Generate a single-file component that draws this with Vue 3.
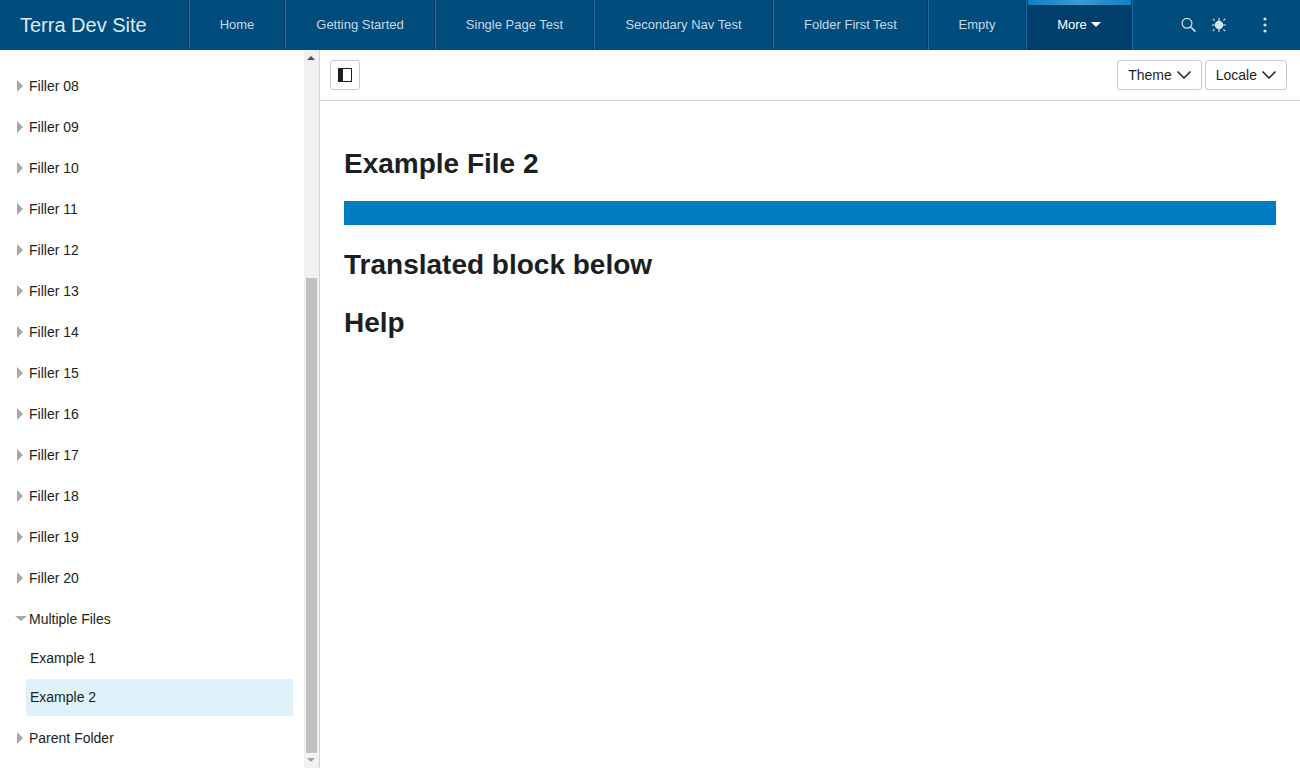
<template>
  <div class="app">
    <header class="header">
      <div class="brand">Terra Dev Site</div>
      <nav class="tabs">
        <a v-for="tab in tabs" :key="tab.label" class="tab" :style="{ width: tab.width + 'px' }">{{ tab.label }}</a>
        <a class="tab tab-more">
          More
          <span class="more-caret"></span>
        </a>
      </nav>
      <div class="utils">
        <svg class="util-search" width="16" height="16" viewBox="0 0 16 16">
          <circle cx="6" cy="6.3" r="4.9" fill="none" stroke="#d3e3ee" stroke-width="1.2" />
          <path d="M9.8 10 L14.4 14.6" stroke="#d3e3ee" stroke-width="1.6" />
        </svg>
        <svg class="util-bug" width="16" height="16" viewBox="0 0 16 16">
          <circle cx="8" cy="8" r="4.2" fill="#d3e3ee" />
          <path d="M8 1v14M1 8h14M1.8 1.8l1.8 1.8M14.2 1.8l-1.8 1.8M1.8 14.2l1.8-1.8M14.2 14.2l-1.8-1.8" stroke="#d3e3ee" stroke-width="1.2" />
        </svg>
        <svg class="util-menu" width="4" height="16" viewBox="0 0 4 16">
          <circle cx="2" cy="2" r="1.6" fill="#d3e3ee" />
          <circle cx="2" cy="8" r="1.6" fill="#d3e3ee" />
          <circle cx="2" cy="14" r="1.6" fill="#d3e3ee" />
        </svg>
      </div>
    </header>

    <div class="body">
      <aside class="side">
        <div class="side-list">
          <div v-for="item in fillers" :key="item" class="row">
            <span class="arrow-right"></span>{{ item }}
          </div>
          <div class="row row-open">
            <span class="arrow-down"></span>Multiple Files
          </div>
          <div class="child">Example 1</div>
          <div class="child selected">Example 2</div>
          <div class="row">
            <span class="arrow-right"></span>Parent Folder
          </div>
        </div>
        <div class="scrollbar">
          <span class="scroll-up"></span>
          <div class="scroll-thumb"></div>
          <span class="scroll-down"></span>
        </div>
      </aside>

      <main class="main">
        <div class="toolbar">
          <button class="btn btn-icon">
            <svg width="14" height="14" viewBox="0 0 14 14">
              <rect x="0.5" y="0.5" width="13" height="13" fill="#fff" stroke="#1c1f21" />
              <rect x="0" y="0" width="5" height="14" fill="#1c1f21" />
            </svg>
          </button>
          <div class="spacer"></div>
          <button class="btn btn-select">
            Theme
            <svg width="14" height="8" viewBox="0 0 14 8"><path d="M0.5 0.5 L7 7 L13.5 0.5" fill="none" stroke="#1c1f21" stroke-width="1.5" /></svg>
          </button>
          <button class="btn btn-select">
            Locale
            <svg width="14" height="8" viewBox="0 0 14 8"><path d="M0.5 0.5 L7 7 L13.5 0.5" fill="none" stroke="#1c1f21" stroke-width="1.5" /></svg>
          </button>
        </div>
        <div class="content">
          <h1>Example File 2</h1>
          <div class="blue-bar"></div>
          <h2>Translated block below</h2>
          <h2>Help</h2>
        </div>
      </main>
    </div>
  </div>
</template>

<script setup>
const tabs = [
  { label: 'Home', width: 96 },
  { label: 'Getting Started', width: 150 },
  { label: 'Single Page Test', width: 159 },
  { label: 'Secondary Nav Test', width: 179 },
  { label: 'Folder First Test', width: 155 },
  { label: 'Empty', width: 98 }
]

const fillers = []
for (let i = 8; i <= 20; i++) {
  fillers.push('Filler ' + String(i).padStart(2, '0'))
}
</script>

<style>
html, body { margin: 0; overflow: hidden; }
</style>

<style scoped>
.app {
  width: 1300px;
  height: 768px;
  display: flex;
  flex-direction: column;
  font-family: "Liberation Sans", Arial, sans-serif;
  color: #1c1f21;
  overflow: hidden;
}

.header {
  height: 50px;
  flex: none;
  display: flex;
  background: #004c7d;
}
.brand {
  width: 189px;
  box-sizing: border-box;
  padding-left: 20px;
  font-size: 20px;
  line-height: 50px;
  color: #dfe9f0;
}
.tabs {
  display: flex;
  border-left: 1px solid #1a6ea3;
  box-shadow: -1px 0 0 #003a60;
}
.tab {
  box-sizing: border-box;
  border-right: 1px solid #1a6ea3;
  box-shadow: inset -1px 0 0 #003a60;
  display: flex;
  align-items: center;
  justify-content: center;
  padding: 0 1px 2px 0;
  font-size: 13px;
  color: #c5d8e5;
}
.tab-more {
  position: relative;
  width: 106px;
  gap: 4px;
  color: #fff;
  background: #003f6b;
}
.tab-more::before {
  content: "";
  position: absolute;
  left: 1px;
  right: 1px;
  top: 0;
  height: 5px;
  background: linear-gradient(90deg, #0f80c4, #3d9ad2 50%, #0f80c4);
}
.more-caret {
  width: 0;
  height: 0;
  border-left: 5px solid transparent;
  border-right: 5px solid transparent;
  border-top: 5px solid #fff;
}
.utils {
  flex: 1;
  display: flex;
  align-items: center;
  padding-left: 48px;
}
.util-search { margin-right: 14px; }
.util-bug { margin-right: 36px; }

.body {
  flex: 1;
  display: flex;
  min-height: 0;
}
.side {
  width: 320px;
  flex: none;
  box-sizing: border-box;
  display: flex;
  border-right: 1px solid #d3d4d5;
}
.side-list {
  flex: 1;
  padding: 17px 11px 0 0;
  font-size: 14px;
  overflow: hidden;
}
.row {
  height: 37px;
  margin-bottom: 4px;
  display: flex;
  align-items: center;
  padding-left: 16px;
}
.row-open { margin-bottom: 3px; }
.arrow-right {
  width: 0;
  height: 0;
  margin: 0 6px 0 1px;
  border-top: 6px solid transparent;
  border-bottom: 6px solid transparent;
  border-left: 6px solid #a8a8a8;
}
.arrow-down {
  width: 0;
  height: 0;
  margin: 0 2px 0 -1px;
  border-left: 6px solid transparent;
  border-right: 6px solid transparent;
  border-top: 5px solid #a8a8a8;
}
.child {
  height: 37px;
  line-height: 37px;
  margin: 0 0 2px 26px;
  padding-left: 4px;
}
.selected {
  margin-bottom: 3px;
  background: #dff1fb;
}

.scrollbar {
  width: 15px;
  flex: none;
  background: #f1f1f1;
  position: relative;
}
.scroll-up {
  position: absolute;
  left: 3px;
  top: 6px;
  border-left: 4px solid transparent;
  border-right: 4px solid transparent;
  border-bottom: 4px solid #505050;
}
.scroll-down {
  position: absolute;
  left: 3px;
  bottom: 6px;
  border-left: 4px solid transparent;
  border-right: 4px solid transparent;
  border-top: 4px solid #a3a3a3;
}
.scroll-thumb {
  position: absolute;
  top: 228px;
  left: 2px;
  width: 11px;
  height: 475px;
  background: #c1c1c1;
}

.main {
  flex: 1;
  min-width: 0;
}
.toolbar {
  height: 51px;
  box-sizing: border-box;
  border-bottom: 1px solid #d3d4d5;
  display: flex;
  align-items: center;
  padding: 0 13px 1px 10px;
  gap: 3px;
}
.spacer { flex: 1; }
.btn {
  height: 30px;
  box-sizing: border-box;
  background: #fff;
  border: 1px solid #c8cacb;
  border-radius: 3px;
  font-family: inherit;
  font-size: 14px;
  color: #1c1f21;
  display: flex;
  align-items: center;
  justify-content: center;
  padding: 0;
}
.btn-icon { width: 30px; }
.btn-select {
  padding: 0 10px;
  gap: 5px;
}

.content {
  padding: 47px 24px 0;
}
h1, h2 {
  margin: 0;
  font-size: 28px;
  line-height: 32px;
  font-weight: 700;
  color: #1c1f21;
}
.blue-bar {
  height: 24px;
  margin: 21px 0 24px;
  background: #007cc3;
}
h2 + h2 { margin-top: 26px; }
</style>
